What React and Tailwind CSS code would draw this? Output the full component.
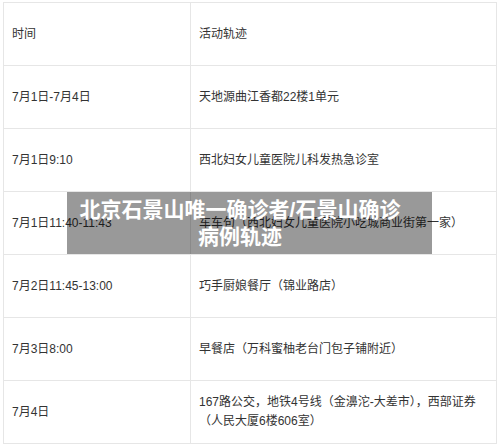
const rows = [
  { time: "时间", place: "活动轨迹" },
  { time: "7月1日-7月4日", place: "天地源曲江香都22楼1单元" },
  { time: "7月1日9:10", place: "西北妇女儿童医院儿科发热急诊室" },
  { time: "7月1日11:40-11:43", place: "车车句（西北妇女儿童医院小吃城商业街第一家）" },
  { time: "7月2日11:45-13:00", place: "巧手厨娘餐厅（锦业路店）" },
  { time: "7月3日8:00", place: "早餐店（万科蜜柚老台门包子铺附近）" },
  {
    time: "7月4日",
    place: "167路公交，地铁4号线（金濞沱-大差市），西部证券（人民大厦6楼606室）",
  },
];

export default function App() {
  return (
    <div
      className="relative w-[500px] h-[448px] bg-white overflow-hidden text-[#333]"
      style={{ fontFamily: '"Liberation Sans", "Noto Sans CJK SC", sans-serif' }}
    >
      {/* track table */}
      <div className="ml-[3px] mt-[2px] w-[494px] border-t border-l border-r border-[#e6e6e6]">
        {rows.map((r, i) => (
          <div key={i} className="flex h-[63px] border-b border-[#e6e6e6]">
            <div className="w-[187px] flex items-center pl-[8px] border-r border-[#e6e6e6] text-[12px]">
              {r.time}
            </div>
            <div className="flex-1 flex items-center pl-[8px] pr-[6px] text-[12px] leading-[19px]">
              {r.place}
            </div>
          </div>
        ))}
      </div>

      {/* title overlay */}
      <div className="absolute left-[67px] top-[192px] w-[365px] h-[62px] bg-black/40 flex items-center pl-[8px] pr-[27px]">
        <p className="w-full text-center text-white font-bold text-[21px] leading-[27px]">
          北京石景山唯一确诊者/石景山确诊病例轨迹
        </p>
      </div>
    </div>
  );
}
